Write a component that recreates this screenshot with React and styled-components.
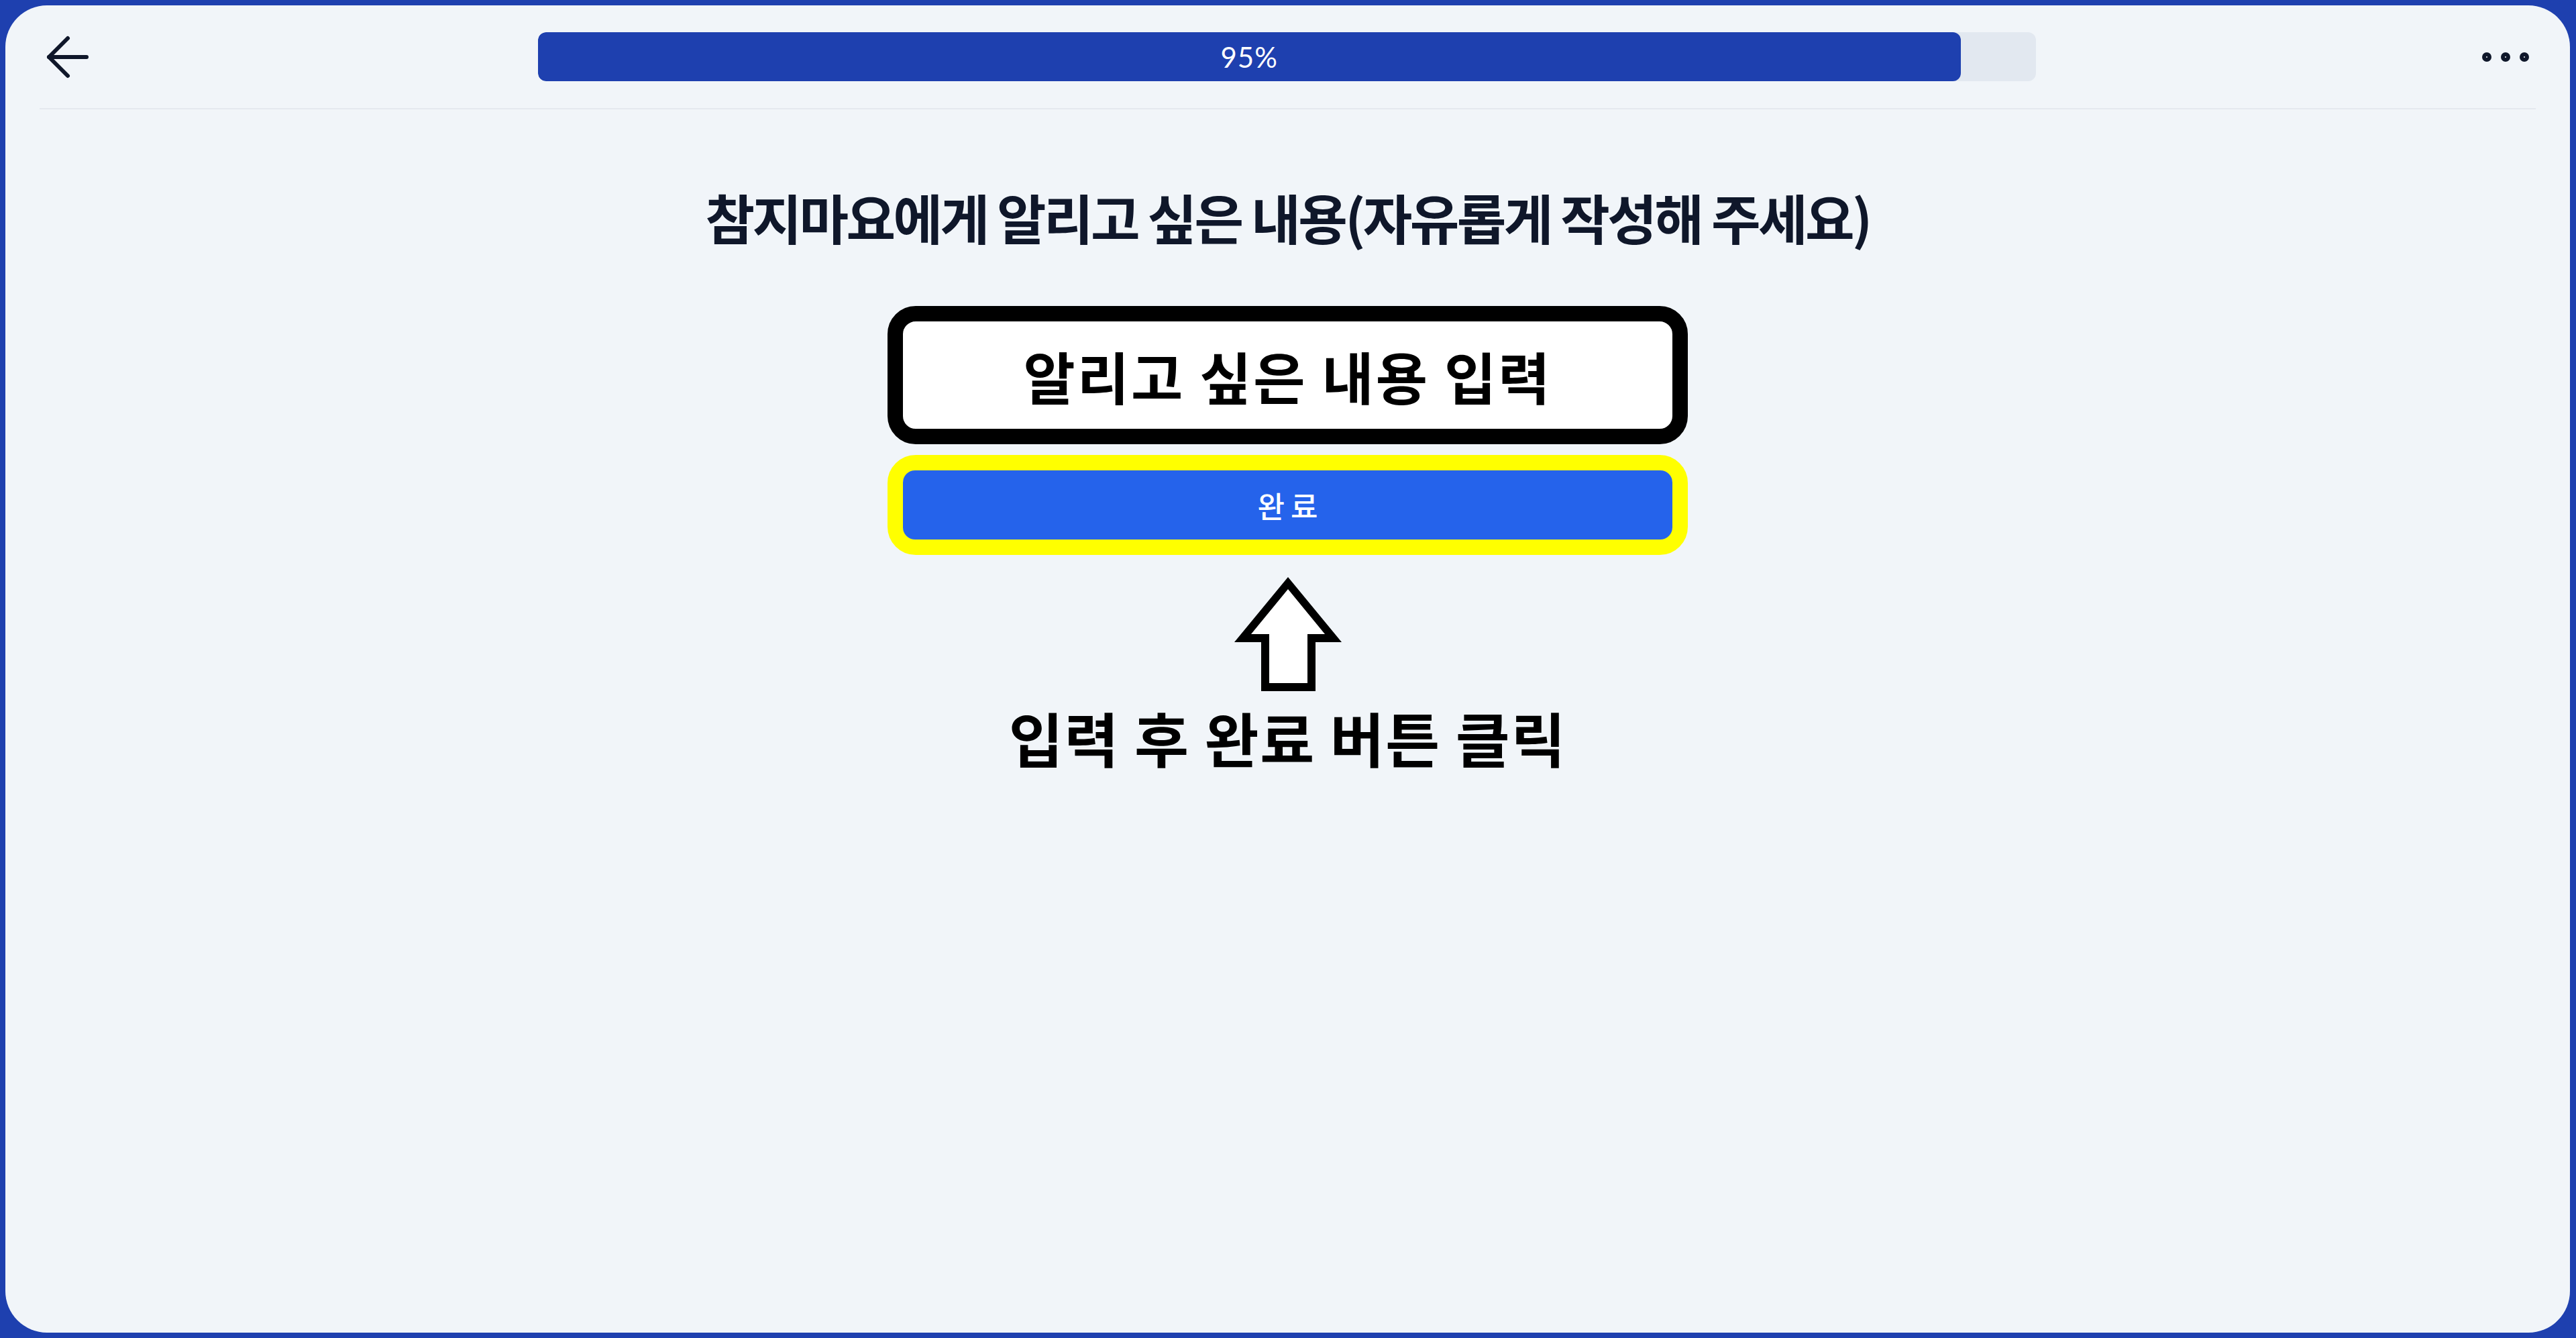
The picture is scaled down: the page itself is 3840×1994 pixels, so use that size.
import { createGlobalStyle } from 'styled-components';
import styled from 'styled-components';
import { ArrowLeft, Ellipsis } from 'lucide-react';

const GlobalStyle = createGlobalStyle`
  html, body {
    margin: 0;
    padding: 0;
    background: #1e40af;
  }
  * {
    box-sizing: border-box;
  }
`;

const progress = 95;

function App() {
  return (
    <Frame>
      <GlobalStyle />
      <Panel>
        <Header>
          <IconButton $offset="-6px" aria-label="back">
            <ArrowLeft size={96} strokeWidth={1.5} color="#0f172a" />
          </IconButton>
          <ProgressWrap>
            <Track>
              <Fill style={{ width: `${progress}%` }}>
                <FillLabel>{progress}%</FillLabel>
              </Fill>
            </Track>
          </ProgressWrap>
          <IconButton $offset="3px" $right aria-label="more">
            <Ellipsis size={96} strokeWidth={1.5} color="#0f172a" />
          </IconButton>
        </Header>

        <Content>
          <Title>참지마요에게 알리고 싶은 내용(자유롭게 작성해 주세요)</Title>
          <InputFrame>
            <HintText>알리고 싶은 내용 입력</HintText>
          </InputFrame>
          <HighlightFrame>
            <DoneButton>완료</DoneButton>
          </HighlightFrame>
          <UpArrow width="160" height="170" viewBox="0 0 160 170">
            <polygon points="80,0 160,97 121,97 121,170 40,170 40,97 0,97" fill="#000" />
            <polygon points="80,18 135,85 109,85 109,158 52,158 52,85 25,85" fill="#fff" />
          </UpArrow>
          <Caption>입력 후 완료 버튼 클릭</Caption>
        </Content>
      </Panel>
    </Frame>
  );
}

export default App;

const Frame = styled.div`
  padding: 8px 9px 8px 8px;
  height: 1994px;
`;

const Panel = styled.div`
  height: 100%;
  background: #f1f5f9;
  border-radius: 62px;
  overflow: hidden;
  font-family: "Noto Sans CJK KR", "Noto Sans", sans-serif;
`;

const Header = styled.div`
  margin: 0 51px;
  height: 155px;
  display: flex;
  align-items: center;
  border-bottom: 2px solid #e5e9ef;
`;

const IconButton = styled.button`
  width: 96px;
  height: 96px;
  padding: 0;
  border: none;
  background: none;
  display: flex;
  align-items: center;
  justify-content: center;
  cursor: pointer;
  margin-left: ${(p) => (p.$right ? '0' : p.$offset)};
  margin-right: ${(p) => (p.$right ? `-${p.$offset}` : '0')};
`;

const ProgressWrap = styled.div`
  flex: 1;
  display: flex;
  justify-content: center;
`;

const Track = styled.div`
  width: 2233px;
  height: 73px;
  background: #e2e8f0;
  border-radius: 12px;
  overflow: hidden;
`;

const Fill = styled.div`
  height: 100%;
  background: #1e40af;
  border-radius: 12px;
  display: flex;
  align-items: center;
  justify-content: center;
`;

const FillLabel = styled.span`
  color: #ffffff;
  font-family: Lato, "Noto Sans", sans-serif;
  font-size: 42px;
  font-weight: 400;
  letter-spacing: 1px;
`;

const Content = styled.div`
  display: flex;
  flex-direction: column;
  align-items: center;
  padding-top: 111px;
`;

const Title = styled.h1`
  margin: 0;
  font-size: 80px;
  line-height: 96px;
  font-weight: 700;
  letter-spacing: -0.045em;
  color: #0f172a;
`;

const InputFrame = styled.div`
  margin-top: 86px;
  width: 1193px;
  height: 206px;
  border: 23px solid #000;
  border-radius: 42px;
  background: #ffffff;
  display: flex;
  align-items: center;
  justify-content: center;
`;

const HintText = styled.span`
  font-size: 84px;
  font-weight: 700;
  letter-spacing: 0.035em;
  color: #000;
`;

const HighlightFrame = styled.div`
  margin-top: 16px;
  width: 1193px;
  height: 149px;
  border: 23px solid #ffff00;
  border-radius: 42px;
  background: #f1f5f9;
`;

const DoneButton = styled.button`
  width: 100%;
  height: 100%;
  border: none;
  border-radius: 18px;
  background: #2563eb;
  color: #ffffff;
  font-family: "Noto Sans CJK KR", sans-serif;
  font-size: 44px;
  font-weight: 500;
  letter-spacing: 0.2em;
  text-indent: 0.2em;
  cursor: pointer;
`;

const UpArrow = styled.svg`
  display: block;
  margin-top: 33px;
`;

const Caption = styled.p`
  margin: 13px 0 0;
  font-size: 88px;
  line-height: 110px;
  font-weight: 700;
  letter-spacing: 0.02em;
  color: #000;
`;
